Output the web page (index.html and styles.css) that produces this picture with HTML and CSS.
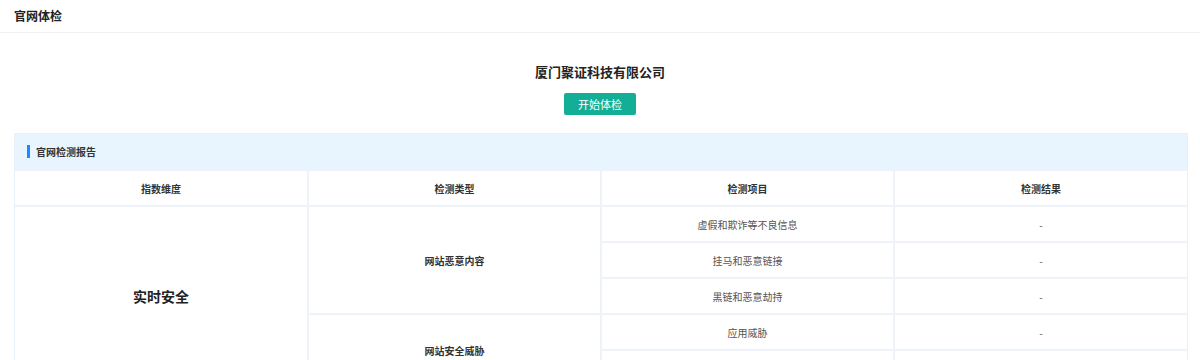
FILE: index.html
```html
<!DOCTYPE html>
<html lang="zh-CN">
<head>
<meta charset="UTF-8">
<meta name="viewport" content="width=device-width, initial-scale=1.0">
<title>官网体检</title>
<link rel="stylesheet" href="styles.css">
</head>
<body>
<div class="topbar">官网体检</div>
<div class="intro">
  <h2 class="company">厦门聚证科技有限公司</h2>
  <button class="start-btn">开始体检</button>
</div>
<div class="report">
  <div class="report-head"><span class="mark"></span>官网检测报告</div>
  <table class="report-table">
    <thead>
      <tr>
        <th>指数维度</th>
        <th>检测类型</th>
        <th>检测项目</th>
        <th>检测结果</th>
      </tr>
    </thead>
    <tbody>
      <tr>
        <td rowspan="5" class="dim">实时安全</td>
        <td rowspan="3" class="type">网站恶意内容</td>
        <td>虚假和欺诈等不良信息</td>
        <td>-</td>
      </tr>
      <tr>
        <td>挂马和恶意链接</td>
        <td>-</td>
      </tr>
      <tr>
        <td>黑链和恶意劫持</td>
        <td>-</td>
      </tr>
      <tr>
        <td rowspan="2" class="type">网站安全威胁</td>
        <td>应用威胁</td>
        <td>-</td>
      </tr>
      <tr>
        <td>系统威胁</td>
        <td>-</td>
      </tr>
    </tbody>
  </table>
</div>
</body>
</html>
```

FILE: styles.css
```css
body {
  margin: 0;
  padding: 0;
  background-color: #fff;
  color: #333;
  font-family: "Noto Sans CJK SC", "Noto Sans", sans-serif;
}
.topbar {
  height: 32px;
  line-height: 32px;
  padding: 0 14px;
  font-size: 12px;
  font-weight: bold;
  color: #222;
  border-bottom: 1px solid #f0f0f0;
}
.intro {
  text-align: center;
  padding-top: 29px;
  height: 71px;
}
.company {
  margin: 0;
  font-size: 13px;
  line-height: 20px;
  font-weight: bold;
  color: #222;
}
.start-btn {
  margin-top: 11px;
  width: 72px;
  height: 22px;
  padding: 0;
  border: none;
  border-radius: 2px;
  background-color: #13ae96;
  color: #fff;
  font-family: inherit;
  font-size: 11px;
  cursor: pointer;
}
.report {
  margin: 0 12px 0 14px;
  border: 1px solid #e8f1f8;
  border-bottom: none;
}
.report-head {
  display: flex;
  align-items: center;
  height: 35px;
  padding-left: 12px;
  background-color: #e8f5fe;
  font-size: 10px;
  font-weight: bold;
  color: #333;
}
.mark {
  width: 3px;
  height: 13px;
  margin-right: 6px;
  background-color: #1a8cff;
}
.report-table {
  width: 100%;
  border-collapse: collapse;
  table-layout: fixed;
  font-size: 10px;
}
.report-table th,
.report-table td {
  height: 34px;
  padding: 0;
  text-align: center;
  border: 2px solid #edf3f9;
}
.report-table tr > :first-child {
  border-left: none;
}
.report-table tr > :last-child {
  border-right: none;
}
.report-table th {
  font-weight: bold;
  color: #333;
}
.report-table td {
  color: #555;
}
.report-table td.type {
  font-weight: bold;
  color: #333;
}
.report-table td.dim {
  font-size: 14px;
  font-weight: bold;
  color: #222;
}
```
